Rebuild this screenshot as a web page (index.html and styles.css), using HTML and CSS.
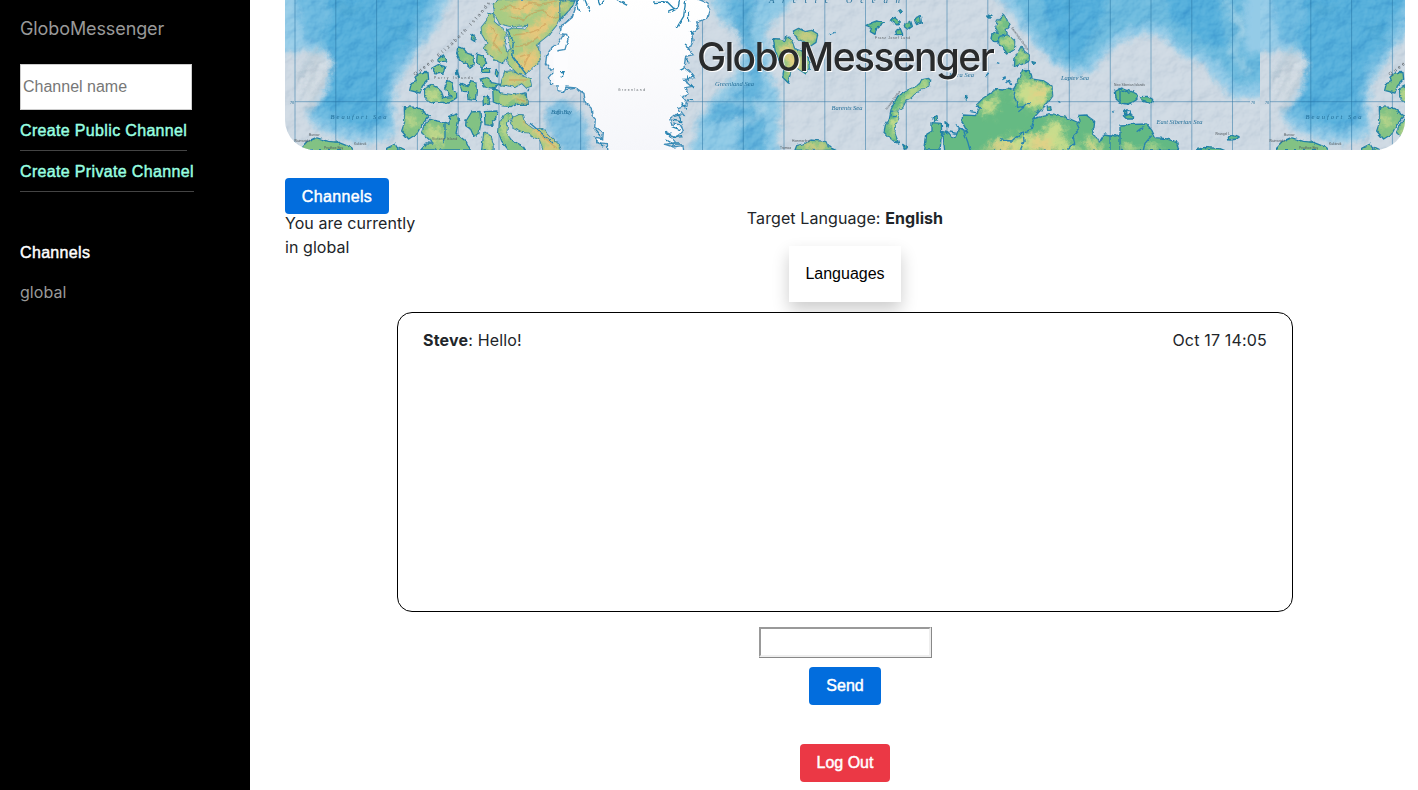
FILE: index.html
```html
<!DOCTYPE html>
<html lang="en">
<head>
<meta charset="utf-8">
<title>GloboMessenger</title>
<link rel="stylesheet" href="styles.css">
</head>
<body>
<aside class="sidebar">
  <div class="brand">GloboMessenger</div>
  <input class="channel-input" type="text" placeholder="Channel name">
  <a class="create public">Create Public Channel</a>
  <a class="create private">Create Private Channel</a>
  <div class="channels-title">Channels</div>
  <a class="channel">global</a>
</aside>
<main class="main">
  <header class="banner">
    <svg class="map" viewBox="285 0 1120 150" preserveAspectRatio="none" aria-hidden="true">
      <defs>
        <filter id="soft" x="-20%" y="-20%" width="140%" height="140%"><feGaussianBlur stdDeviation="3" result="b"/><feTurbulence type="fractalNoise" baseFrequency=".12" numOctaves="3" seed="4"/><feDisplacementMap in="b" scale="9" xChannelSelector="R" yChannelSelector="G"/></filter>
        <filter id="hill" x="-20%" y="-20%" width="140%" height="140%"><feGaussianBlur stdDeviation="9" result="b"/><feTurbulence type="fractalNoise" baseFrequency=".05" numOctaves="3" seed="9"/><feDisplacementMap in="b" scale="44" xChannelSelector="R" yChannelSelector="G"/></filter>
        <filter id="rough" x="-5%" y="-5%" width="110%" height="110%"><feTurbulence type="fractalNoise" baseFrequency=".065" numOctaves="2" seed="3" result="n"/><feDisplacementMap in="SourceGraphic" in2="n" scale="11" xChannelSelector="R" yChannelSelector="G"/></filter>
        <filter id="relief" x="0" y="0" width="100%" height="100%" color-interpolation-filters="sRGB"><feTurbulence type="fractalNoise" baseFrequency=".06" numOctaves="4" seed="12"/><feDiffuseLighting surfaceScale="2.4" diffuseConstant=".64" lighting-color="#fff"><feDistantLight azimuth="225" elevation="52"/></feDiffuseLighting></filter>
        <linearGradient id="ice" x2="0" y2="1"><stop stop-color="#fff"/><stop offset="1" stop-color="#f5f6fa"/></linearGradient>

        <path id="w1" d="M640 15L655 0H875V20L855 35L842 48L830 75L805 105L780 125L768 135L780 155L778 185L755 205L738 224L715 222L697 205L682 190L680 165L692 148L686 110L680 92L700 85L735 88L745 75L700 80L660 72L645 45Z
          M625 38L640 42L642 65L665 85L678 105L674 135L682 165L668 190L642 178L625 158L610 145L622 130L606 103L604 82L620 62Z
          M576 103L586 110L584 124L574 118Z M533 141L550 145L562 160L578 165L582 195L570 205L555 190L540 180L530 160Z
          M592 162L609 168L620 190L606 202L590 185Z M470 180L490 165L500 182L480 187Z M455 205L475 194L495 200L490 219L468 222Z M529 207L538 232L530 222Z
          M608 206H628L629 217H607Z M648 208L658 215L654 231L646 222Z M675 215L697 213L718 226L750 236L754 258L739 263L725 250L704 262L680 255L662 258L668 236Z
          M601 238L620 233L636 248L661 253L640 265L610 260Z M405 232L422 218L444 217L446 238L427 258L420 279L389 271L394 251L409 245Z
          M434 265L456 255L470 262L484 275L491 293L513 290L502 273L493 266L504 242L515 246L519 268L530 277L530 293L507 309L475 306L452 308L434 290Z
          M539 250L561 260L571 245L591 250L592 275L589 302L567 299L565 275L546 274Z M609 291L625 286L629 312L610 317Z
          M638 262L661 279L700 285L738 279L742 313L715 312L693 320L665 317L640 306Z
          M373 320L410 322L448 348L425 375L410 402L386 417L365 393L374 367Z
          M430 382L448 358L480 365L507 370L509 349L530 342L536 360L528 400L559 425L571 450H420L438 429L460 430L425 398Z
          M558 363L575 336L600 334L603 371L596 402L580 409L570 386L557 377Z M613 335L654 333L647 355L635 365L636 376L615 374Z
          M612 395L633 409L642 440L642 451H605Z M659 366L670 346L693 340L697 350L682 368L680 402L694 420L729 438L737 451L687 452L665 423L656 398Z
          M700 351L715 344L730 345L736 370L761 388L788 386L814 413L837 434L844 452H790L780 420L757 409L744 398L728 397L700 383L692 369Z
          M65 442L82 424L108 413L145 424L175 427L215 443L220 452H65Z M320 445L345 432L357 452H320Z M360 442L380 452H360Z"/>
        <path id="w3" d="M0 0H45L38 18L12 48L0 62Z M640 116L660 117L676 123L680 108L695 120L704 146L724 152L745 173L748 207L738 222L715 207L702 195L691 218L685 249L668 232L672 210L656 178L645 150Z
          M700 93L716 85L735 95L755 91L773 102L768 127L752 138L735 126L712 117Z M705 450L710 437L735 431L750 420L798 425L804 440L828 451Z"/>
        <path id="w4" d="M78 76L98 67L110 63L130 70L110 85L105 103L91 95L94 82Z M151 60L166 52L181 66L171 75Z M195 70L212 64L217 79L204 88L193 80Z M223 60L241 47L244 67L230 74Z M167 94L181 86L188 103L170 104Z M175 34L181 29L187 36L180 40Z
          M456 103L475 98L467 83L472 65L490 43L500 58L508 77L498 90L502 104L524 123L523 148L503 162L482 136L480 125L461 125L453 115Z
          M545 136L553 154L568 165L567 182L550 191L523 199L525 174Z M576 185L587 188L580 193Z M443 45L456 49L450 55Z
          M266 235L272 242L269 255L251 267L229 277L214 292L199 300L188 322L172 331L178 350L166 376L164 398L176 430L165 426L146 411L132 397L136 376L148 355L153 329L161 312L173 289L203 270L227 259L247 239Z
          M406 347L420 328L412 313L430 294L468 268L488 270L501 264L520 268L540 236L548 211L568 212L574 237L612 243L636 258L638 288L620 313L596 337L578 357L603 350L632 344L678 352L718 369L714 346L738 345L764 364L762 383L755 391L778 427L793 402L825 408L850 402L855 380L872 371V452H314L308 394L327 399L336 413L348 408L359 381L383 398L366 365L368 345Z
          M276 368L304 370L305 400L300 450H254L260 403L276 393Z M279 354L291 350L293 360L283 364Z M315 365L323 371L320 380Z M622 322L632 320L633 331H623Z M588 335L595 330L593 340Z M377 285L382 293L376 300Z M826 274L845 264L872 275V309L850 311L829 298Z M188 433L202 443L194 448Z"/>
        <path id="w5" d="M0 265L22 277L34 274L50 282L51 298L39 306L23 312L0 309Z M61 290L82 289L98 298L94 311L68 303Z M13 333L19 331L21 340L14 341Z M10 347L27 340L41 348L40 357L20 357Z M0 375L38 373L80 372L96 392L106 413L137 416L170 426L176 451H0Z M325 411L340 403L357 410L351 417L326 420Z M230 449L253 442L300 446L315 452H230Z"/>
        <clipPath id="c1"><use href="#w1"/></clipPath><clipPath id="c3"><use href="#w3"/></clipPath><clipPath id="c4"><use href="#w4"/></clipPath><clipPath id="c5"><use href="#w5"/></clipPath>

        <g id="world">
          <rect x="285" width="976" height="150" fill="#ced9e3"/>
          <g filter="url(#soft)">
            <path fill="#94cbe7" d="M270 -10H454L438 25L415 55L398 82L393 105L397 128L390 139L365 144L336 138L314 126L305 113L319 98L331 67L318 54L303 51L285 53H270V-10Z"/>
            <path fill="#6dbae0" d="M295 -10H443L429 20L412 53L394 75L389 92L391 127L365 135L330 127L310 113L323 97L331 70L325 50L305 40L298 15Z"/>
            <path fill="#55afdb" d="M328 -10H434L420 14L405 49L388 67L384 83L382 122L362 126L332 116L322 105L329 91L332 56L322 37L330 20Z"/>
            <path fill="#80bfe0" d="M545 105L568 100L586 121L590 155H562L548 130Z"/>
            <path fill="#8cc8e5" d="M710 -5H798L775 20L764 30L770 52L766 70L780 93L778 155H690L698 120L716 94L735 77L744 56L738 32L719 20Z"/>
            <path fill="#62b3dc" d="M724 -5H760L752 14L748 38L760 60L764 85L756 106L764 120L768 153H739L737 138L742 119L725 119L704 127L716 101L748 85L752 60L740 40Z"/>
            <path fill="#92cae7" d="M990 -10H1270V97L1231 97L1216 80L1202 62L1185 58L1162 36L1144 34L1117 43L1105 57L1091 72L1072 74L1051 61L1032 42L1018 22L1004 6Z"/>
            <path fill="#6cbade" d="M1010 -10H1270V84L1236 85L1220 65L1202 52L1185 48L1162 26L1144 24L1114 33L1100 50L1084 66L1070 68L1052 54L1036 36L1024 16Z"/>
            <path fill="#53aedb" d="M1042 -10H1108L1098 28L1083 50L1074 60L1062 50L1053 32L1044 12Z M1163 -10H1218L1221 25L1228 48L1213 46L1190 34L1171 18Z"/>
          </g>
          <g fill="none" stroke="#3d98c3" stroke-width="3" filter="url(#soft)" opacity=".65"><path d="M337 5L350 12L360 7M392 30L404 26M401 36L411 39M1067 0L1070 15M740 25L755 45M747 5L753 30"/></g>
          <g filter="url(#soft)"><path fill="#ced9e3" opacity=".8" d="M297 98L301 70L318 48L331 60L326 84L312 108Z"/></g>
          <g filter="url(#soft)" fill="none"><path stroke="#f4f5f7" stroke-width="4" opacity=".6" d="M300 92L320 55M306 102L328 57M311 105L330 65"/><path stroke="#7299ad" stroke-width="2" d="M298 80L318 48M303 98L322 55M307 111L328 68"/><path stroke="#ddeaf0" stroke-width="3" opacity=".65" d="M1225 0L1243 30L1232 50L1248 75M1237 15L1254 45M715 96L765 108L756 118L735 124"/></g>
          <rect x="285" width="976" height="150" filter="url(#relief)" class="shade"/>
          <g class="lines"><path d="M295 0V150M335.8 0V150M376.6 0V150M417.4 0V150M458.2 0V150M499 0V150M539.8 0V150M580.6 0V150M702.5 0V150M743.3 0V150M784 0V150M824.8 0V150M865.5 0V150M906.3 0V150M947 0V150M987.8 0V150M1028.5 0V150M1069.3 0V150M1110.3 0V150M1151 0V150M1191.8 0V150M1232.5 0V150M295 101.7H1250"/></g>
          <g transform="translate(280 0) scale(.33333)"><g filter="url(#rough)">
            <use href="#w1" fill="#82c284" class="coast"/>
            <g clip-path="url(#c1)"><path fill="#b4cf84" d="M600 -5H875L780 240L655 330L665 220L595 150ZM690 330H850V455H790L690 385Z" opacity=".75"/><g filter="url(#hill)"><path fill="#e9c77c" d="M720 0L790 -5L755 30L705 55L680 35ZM810 0L860 10L790 105L720 130L740 90L800 40ZM730 145L770 150L775 190L735 220L710 190ZM625 70L645 75L665 125L650 165L630 130ZM710 285L740 290V310H705ZM680 230L735 235V252H690ZM725 350L790 390L840 450H810L770 405Z"/><path fill="#c4d98b" d="M430 265L480 280V305H440ZM665 345L660 390L690 430L685 360ZM375 340L410 350L390 400ZM545 165L570 170L570 195ZM610 380L640 410V450H610ZM430 390L490 380L480 450Z"/></g>
            <path class="peaks" d="M660 30L690 15L720 28L750 9L785 15L830 5M690 50L730 60L760 35L790 30L815 55L845 45M700 105L745 100L775 88L800 70M705 140L740 135L775 110M630 80L650 105L640 130L665 160M720 170L750 160L730 200M690 240H740M710 296L735 304M730 365L760 380L790 410L830 445"/></g>
            <path class="ice" d="M885 45L842 80L850 105L835 130L816 142L800 165L797 190L813 210L850 209L852 220L815 221L805 233L812 250L840 252L845 270L885 265Z"/>
            <path class="fjord" d="M815 221L852 220L835 227M840 265L852 272L857 263M740 273L747 267M495 370V410L488 430M750 370L780 395L820 430M680 85L700 130L695 165L740 225"/>
          </g></g>
          <g transform="translate(560 0) scale(.33333)"><g filter="url(#rough)">
            <use href="#w3" fill="#82c284" class="coast"/><g clip-path="url(#c3)"><g filter="url(#hill)"><path fill="#e3d080" d="M0 0H35L0 55ZM655 125L705 145L735 205L690 220ZM710 95L765 100L750 130ZM725 430L800 435V450H730Z"/></g></g>
            <path class="ice" d="M55 -10L46 25L37 52L5 79L0 100L20 103L24 118L15 148L-6 152V272L12 275L18 261L47 264L72 280L76 307L94 325L96 346L106 358L104 382L130 397L128 417L106 411L110 428L142 431L144 460H372L369 437L340 441L315 433L345 428L318 397L349 410L370 394L363 374L335 372L329 356L345 343L372 346L354 323L384 314L366 292L385 284L375 263L397 259L371 238L404 236L397 222L372 202L377 169L401 164L387 148L399 121L395 99L416 84L410 66L443 55L451 30L440 8L400 -8Z"/>
            <path class="ice-fill" d="M-20 155H25V255H-20Z"/>
            <path class="fjord" d="M48 0L60 38M75 0L92 40M115 0L120 14L135 0M170 0L202 16M280 8L322 6L343 27M327 34L355 20L359 0M351 82L371 49L377 0M386 65L385 35M0 215H12L3 232M375 176L388 190M372 205L360 211M401 225L385 240L380 225M402 264L390 250M401 302L381 300M380 327L365 307M330 360L365 365L356 345L340 350M335 380L362 390M315 398L340 410L370 407M320 420L340 432L366 432M104 388L124 411M105 418L133 439M385 145L372 135M402 103L390 95M807 104L824 97"/>
          </g></g>
          <g transform="translate(840 0) scale(.33333)"><g filter="url(#rough)">
            <use href="#w4" fill="#65ba83" class="coast"/><g clip-path="url(#c4)"><g filter="url(#hill)"><path fill="#c9dd8c" d="M470 60H500L485 90ZM480 110H520V160ZM530 150L570 165L530 190ZM145 375L195 295L265 240L275 260L205 315L165 420ZM545 240L635 260L620 310L575 330L520 290ZM410 320L480 280L455 350ZM420 455L480 420L610 400L630 360L680 370L660 405L730 455ZM745 400L790 455H735Z"/><path fill="#e6cf86" d="M580 255L620 270L610 300L575 295ZM455 435L510 425L540 455H430ZM580 410H630L640 455H570ZM750 425L780 450H750Z" opacity=".8"/></g></g>
            <path class="fjord" d="M525 265L522 290L530 306L529 322L550 320L560 310L572 311M535 335L552 322M470 128L480 110L500 104M480 420L515 423L545 397L574 389L580 360M550 397L552 425L540 452M710 370L719 389L700 409L704 430L683 450M350 377L370 390L383 425L390 450M330 396L350 400M810 402V450M153 334L172 331M155 350H170M408 315L425 329M408 338L392 335M437 228L446 219M497 230L488 234M510 240L500 249M470 188L478 190M818 332L820 338M852 337L861 329L872 341L858 350M487 239L498 233M512 255L508 245M652 304L661 309"/>
          </g></g>
          <g transform="translate(1120 0) scale(.33333)"><g filter="url(#rough)"><use href="#w5" fill="#62b984" class="coast"/><g clip-path="url(#c5)"><g filter="url(#hill)"><path fill="#c9dd8c" d="M0 435H25L80 455H0ZM90 430L130 455H80Z"/></g></g><path class="fjord" d="M50 395L62 386L70 384M95 407L75 430L70 450"/></g></g>
          <g class="sea"><text x="330.5" y="119" textLength="56">Beaufort Sea</text><text x="551" y="113.5" textLength="21">Baffin Bay</text><text x="715" y="86" textLength="39">Greenland Sea</text><text x="831.5" y="110" textLength="31">Barents Sea</text><text x="949" y="76.5" textLength="25">Kara Sea</text><text x="1061" y="79.5" textLength="28">Laptev Sea</text><text x="1156.5" y="124" textLength="46">East Siberian Sea</text><text x="769" y="3" font-size="9" textLength="131">Arctic Ocean</text><text x="290" y="103.5" font-size="4">70</text><text x="1251" y="103.5" font-size="4">70</text></g>
          <path id="queen" d="M415 76Q463 41 495 -3" fill="none"/>
          <g class="place"><text font-size="5" textLength="105"><textPath href="#queen">Queen Elizabeth Islands</textPath></text><text x="434" y="79" textLength="39">Parry Islands</text><text x="618" y="91" textLength="27">Greenland</text><text x="875" y="39" textLength="35">Franz Josef Land</text><text x="309" y="136">Barrow</text><text x="294" y="142">Wainwright</text><text x="324" y="149">Prudhoe Bay</text><text x="354" y="145">Kaktovik</text><text x="432" y="140" textLength="25">Victoria Island</text><text x="792" y="142">Hammerfest</text><text x="780" y="149">Tromsø</text><text x="1114" y="86" textLength="31">New Siberian Islands</text><text x="1215" y="135">Wrangel I.</text><text transform="translate(887 110) rotate(-54)">Novaya Zemlya</text><text transform="translate(1011 28) rotate(54)">Severnaya Zemlya</text></g>
        </g>
      </defs>
      <use href="#world"/><use href="#world" x="975"/>
    </svg>
    <h1 class="title">GloboMessenger</h1>
  </header>
  <section class="controls">
    <div class="current"><button class="btn blue channels-btn">Channels</button><div class="current-text">You are currently in global</div></div>
    <div class="language"><div class="target">Target Language: <b>English</b></div><button class="languages">Languages</button></div>
  </section>
  <section class="chat"><div class="message"><b>Steve</b>: Hello!</div><time class="time">Oct 17 14:05</time></section>
  <form class="composer"><div class="field"><input class="message-input" type="text"></div><button type="button" class="btn blue send">Send</button></form>
  <button class="btn red logout">Log Out</button>
</main>
</body>
</html>
```
FILE: styles.css
```css
* { box-sizing: border-box; }
body { margin: 0; height: 790px; overflow: hidden; display: flex; background: #fff; color: #212529; font: 16px/24px Inter, "Liberation Sans", sans-serif; letter-spacing: .06px; }
button, input { font: inherit; letter-spacing: inherit; }
.sidebar { width: 250px; height: 790px; flex: none; background: #000; padding: 15px 20px; display: flex; flex-direction: column; align-items: flex-start; color: #999; }
.brand { font-size: 18px; line-height: 27px; letter-spacing: -.1px; }
.channel-input { width: 172px; height: 46px; margin-top: 22px; padding: 0 2px; border: 1px solid #ccc; background: #fff; font-family: "Liberation Sans", sans-serif; letter-spacing: 0; }
.channel-input::placeholder { color: #777; opacity: 1; }
.create, .channels-title, .btn, .languages { font-family: "Liberation Sans", sans-serif; letter-spacing: 0; -webkit-text-stroke: .45px currentColor; }
.create { height: 41px; padding-top: 9px; border-bottom: 1px solid #444; color: #98ffe0; white-space: nowrap; letter-spacing: .34px; }
.channels-title { margin-top: 49px; color: #fff; letter-spacing: .34px; }
.channel { margin-top: 15px; }
.main { flex: 1; padding: 0 13px 0 35px; display: flex; flex-direction: column; align-items: center; }
.banner { width: 1120px; height: 150px; flex: none; border-radius: 0 0 30px 30px; overflow: hidden; display: grid; justify-items: center; }
.map { grid-area: 1 / 1; width: 1120px; height: 150px; display: block; }
.title { grid-area: 1 / 1; z-index: 1; margin: 33px 0 0; font-size: 39px; line-height: 48px; font-weight: 500; letter-spacing: -1.65px; color: #292b2c; text-shadow: 1px 1px 0 #fff; }
.shade { mix-blend-mode: soft-light; opacity: .8; }
.coast { stroke: #2381a7; stroke-width: 4px; stroke-linejoin: round; }
.ice { fill: url(#ice); stroke: #438fba; stroke-width: 4px; }
.ice-fill { fill: #fcfcfe; }
.fjord { fill: none; stroke: #2683b0; stroke-width: 4px; }
.peaks { fill: none; stroke: #c99450; stroke-width: 4px; opacity: .5; }
.lines { fill: none; stroke: #216f9f; stroke-width: .7px; opacity: .7; }
.sea { font: italic 6.5px "Liberation Serif", serif; fill: #236f99; letter-spacing: 0; }
.place { font: 3.3px "Liberation Sans", sans-serif; fill: #545b60; letter-spacing: 0; }
.controls { width: 1120px; height: 162px; flex: none; display: grid; grid-template-columns: 140px 1fr 140px; padding-top: 28px; }
.btn { border: 0; border-radius: 4px; padding: 0; color: #fff; }
.blue { background: #026ddd; }
.red { background: #eb3845; }
.channels-btn { width: 104px; height: 36px; display: block; padding-top: 1px; letter-spacing: .34px; }
.current-text { margin-top: -3px; }
.language { display: flex; flex-direction: column; align-items: center; padding-top: 28px; letter-spacing: .09px; }
.languages { width: 112px; height: 56px; margin-top: 16px; border: 0; background: #fff; color: #000; box-shadow: 0 8px 16px rgba(0,0,0,.2); -webkit-text-stroke-width: 0; }
.chat { width: 896px; height: 300px; flex: none; background: #fff; border: 1px solid #000; border-radius: 15px; padding: 15px 25px; display: flex; justify-content: space-between; letter-spacing: .18px; }
.composer { display: flex; flex-direction: column; align-items: center; margin-top: 15px; }
.field { width: 173px; height: 31px; border-right: 1px solid #888; border-bottom: 1px solid #888; }
.message-input { display: block; width: 172px; height: 30px; border: 2px solid; border-color: #999 #eee #eee #999; background: #fff; }
.send { width: 72px; height: 38px; margin-top: 9px; }
.logout { width: 90px; height: 38px; margin-top: 39px; }
```
